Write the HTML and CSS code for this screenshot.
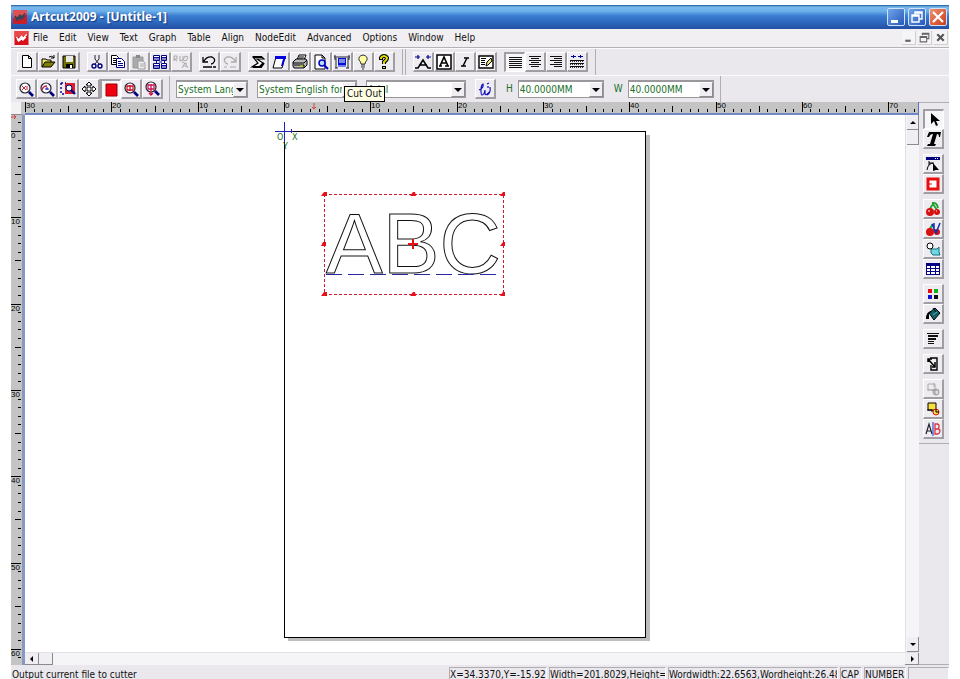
FILE: index.html
```html
<!DOCTYPE html>
<html lang="en">
<head>
    <meta charset="UTF-8">
    <meta name="viewport" content="width=device-width, initial-scale=1.0">
    <title>Artcut2009 - [Untitle-1]</title>
    <link rel="stylesheet" href="styles.css">
</head>
<body>
    <div class="app">
        <header class="titlebar">
            <svg class="logo" viewBox="0 0 16 16"><rect width="16" height="16" fill="#c8202a"/><path d="M0 0h16v5L0 9z" fill="#e05050"/><path d="M2 7l3 3 3-4 2 2 4-4M4 12l4-3 2 1 3-3" stroke="#345" stroke-width="2" fill="none"/></svg>
            <h1 class="title">Artcut2009 - [Untitle-1]</h1>
            <div class="window-buttons">
                <button class="win" aria-label="Minimize"><svg viewBox="0 0 16 16"><path d="M3 11h7v3H3z" fill="#fff"/></svg></button>
                <button class="win" aria-label="Restore"><svg viewBox="0 0 16 16"><path d="M6 6V3h7v7h-3M6 4h7M3 6h7v7H3zM3 7h7" stroke="#fff" stroke-width="1.4" fill="none"/></svg></button>
                <button class="win win-close" aria-label="Close"><svg viewBox="0 0 16 16"><path d="M3 3l10 10M13 3L3 13" stroke="#fff" stroke-width="2.2"/></svg></button>
            </div>
        </header>

        <nav class="menubar">
            <svg class="logo" viewBox="0 0 16 16"><rect width="16" height="16" fill="#d8101c"/><path d="M0 0h16v4L0 8z" fill="#e84848"/><path d="M2 7l3 3 3-4 2 2 4-4M4 12l4-3 2 1 3-3M3 9l2 3M8 7l2 4" stroke="#fff" stroke-width="1.6" fill="none"/></svg>
            <div class="menus">
                <button class="menu">File</button>
                <button class="menu">Edit</button>
                <button class="menu">View</button>
                <button class="menu">Text</button>
                <button class="menu">Graph</button>
                <button class="menu">Table</button>
                <button class="menu">Align</button>
                <button class="menu">NodeEdit</button>
                <button class="menu">Advanced</button>
                <button class="menu">Options</button>
                <button class="menu">Window</button>
                <button class="menu">Help</button>
            </div>
            <div class="child-buttons">
                <button class="child" aria-label="Minimize document"><svg viewBox="0 0 12 12"><path d="M3 8h5v2H3z" fill="#666"/></svg></button>
                <button class="child" aria-label="Restore document"><svg viewBox="0 0 12 12"><path d="M4 4V2h6v5H8M4 3h6M2 5h6v5H2zM2 6h6" stroke="#666" fill="none"/></svg></button>
                <button class="child" aria-label="Close document"><svg viewBox="0 0 12 12"><path d="M3 3l6 6M9 3L3 9" stroke="#555" stroke-width="2"/></svg></button>
            </div>
        </nav>

        <div class="toolbar">
            <div class="group">
                <button class="tool" aria-label="New"><svg viewBox="0 0 16 16"><path d="M3.500 1.500h6l3 3v9h-9zM9.500 1.500v3h3" fill="#fff" stroke="#000"/></svg></button>
                <button class="tool" aria-label="Open"><svg viewBox="0 0 16 16"><path d="M2 13V5h4l1 1h4v2" fill="#f0e860" stroke="#000"/><path d="M2 13l3-5h10l-4 5z" fill="#808000" stroke="#000"/><path d="M9 3q3-2 5 1M14 1v3h-3" fill="none" stroke="#000"/></svg></button>
                <button class="tool" aria-label="Save"><svg viewBox="0 0 16 16"><path d="M2 2h12v12H2z" fill="#707000" stroke="#000"/><path d="M5 2h7v6H5z" fill="#e8e8e8"/><path d="M5 10h7v4H5z" fill="#000"/><path d="M9 11h2v3H9z" fill="#fff"/></svg></button>
            </div>
            <div class="group">
                <button class="tool" aria-label="Cut"><svg viewBox="0 0 16 16"><path d="M6 1v4l4 5M10 1v4l-4 5" fill="none" stroke="#223"/><circle cx="5" cy="12" r="2" fill="none" stroke="#000080" stroke-width="1.4"/><circle cx="11" cy="12" r="2" fill="none" stroke="#000080" stroke-width="1.4"/></svg></button>
                <button class="tool" aria-label="Copy"><svg viewBox="0 0 16 16"><path d="M1.500 1.500h5l2 2v7h-7z" fill="#fff" stroke="#000"/><path d="M3 4.500h3M3 6.500h4M3 8.500h4" stroke="#000"/><path d="M6.500 4.500h5l3 3v6h-8z" fill="#fff" stroke="#000080"/><path d="M8 7.500h3M8 9.500h5M8 11.500h5" stroke="#000080"/></svg></button>
                <button class="tool" aria-label="Paste" disabled><svg viewBox="0 0 16 16"><path d="M2 3h10v11H2z" fill="#aaa" stroke="#999"/><path d="M5 1h4v3H5z" fill="#888"/><path d="M7 7h5l2 2v6H7z" fill="#eee" stroke="#999"/><path d="M9 10h4M9 12h4" stroke="#aaa"/></svg></button>
                <button class="tool" aria-label="Duplicate"><svg viewBox="0 0 16 16"><path d="M1.500 1.500h6v5h-6zM9.500 1.500h5v5h-5zM1.500 9.500h6v5h-6zM9.500 9.500h5v5h-5z" fill="#fff" stroke="#000080"/><path d="M2 3.500h5M10 3.500h4M2 11.500h5M10 11.500h4M4.500 6v3M12.500 6v3M7 8h3M2 5h5M10 5h4M2 13h5M10 13h4" stroke="#1010a0"/></svg></button>
                <button class="tool" aria-label="Copy along path" disabled><svg viewBox="0 0 16 16"><path d="M1 7V2h3v3H1l3 2M7 2v5l3-1V2M12 2l-2 4 3 1 2-4zM9 8l5 2M9 14l3-5 3 5M10 12h4" fill="none" stroke="#aaa"/></svg></button>
            </div>
            <div class="group">
                <button class="tool" aria-label="Undo"><svg viewBox="0 0 16 16"><path d="M2 3v5h5M3 7q3-5 8-4q4 2 2 5q-1 2-3 2" fill="none" stroke="#000" stroke-width="1.3"/><path d="M2 13h9M12 13h3" stroke="#000" stroke-width="1.4"/></svg></button>
                <button class="tool" aria-label="Redo" disabled><svg viewBox="0 0 16 16"><path d="M14 3v5H9M13 7q-3-5-8-4q-4 2-2 5q1 2 3 2" fill="none" stroke="#aaa" stroke-width="1.3"/><path d="M2 13h3M8 13h6" stroke="#aaa"/></svg></button>
            </div>
            <div class="group">
                <button class="tool" aria-label="Plot"><svg viewBox="0 0 16 16"><path d="M3 3h9l2 2H7l6 4-4 4H2l6-4z" fill="#fff" stroke="#000" stroke-width="1.2"/><path d="M3 3h9M3 13h8l3-4" stroke="#000" stroke-width="2" fill="none"/></svg></button>
                <button class="tool" aria-label="Cut out"><svg viewBox="0 0 16 16"><path d="M5 3h9l-3 11H2z" fill="#fff" stroke="#000"/><path d="M4 2h11v3H4zM12 5h2l-2 7h-2z" fill="#0000e0"/></svg></button>
                <button class="tool" aria-label="Print"><svg viewBox="0 0 16 16"><path d="M5 6l2-5h7l-2 5M7 3h5M6 5h5" fill="#fff" stroke="#000"/><path d="M1 8l3-3h10l1 2v4l-3 3H2l-1-2z" fill="#bbb" stroke="#000"/><path d="M1 9h11l3-3M2 11h10v3" stroke="#000" fill="none"/><path d="M8 12h3" stroke="#cc0" stroke-width="1.4"/></svg></button>
                <button class="tool" aria-label="Print preview"><svg viewBox="0 0 16 16"><path d="M2 1h7l3 3v11H2zM9 1v3h3" fill="#fff" stroke="#000"/><circle cx="9" cy="9" r="3" fill="#bdf" stroke="#0000c0" stroke-width="1.5"/><path d="M11 11l4 4" stroke="#0000c0" stroke-width="2"/></svg></button>
                <button class="tool" aria-label="Cutter"><svg viewBox="0 0 16 16"><path d="M0 3h16M1 1v5M15 1v5M2 4v10M14 4v10M1 14h3M12 14h3" stroke="#223" fill="none"/><path d="M4 4h8v7H4z" fill="#0010d0"/><path d="M5 6h6M5 8h6" stroke="#fff"/><path d="M4 12h8" stroke="#0010d0"/></svg></button>
                <button class="tool" aria-label="Tip"><svg viewBox="0 0 16 16"><path d="M6 10q0-2-2-4q-1-4 4-5q5 1 4 5q-2 2-2 4z" fill="#ffffa0" stroke="#333"/><path d="M6 11h4M6 13h4M7 15h2" stroke="#333"/></svg></button>
                <button class="tool" aria-label="Help"><svg viewBox="0 0 16 16"><path d="M5 6V4q1-2 3-2t3 2q0 2-3 4v2" fill="none" stroke="#000" stroke-width="4"/><path d="M5 5V4q1-2 3-2t3 2q0 2-3 4v2" fill="none" stroke="#e8e000" stroke-width="2"/><path d="M6 12h4v3H6z" fill="#000"/><path d="M7 13h2v1H7z" fill="#e8e000"/></svg></button>
            </div>
            <div class="divider"></div>
            <div class="group">
                <button class="tool" aria-label="Text spacing"><svg viewBox="0 0 16 16"><path d="M0 14h3l5-8 5 8h3M4 11h8" fill="none" stroke="#000" stroke-width="1.5"/><path d="M0 3h5M3 1v4M11 3h5M13 1v4" stroke="#000090" stroke-width="1.2"/></svg></button>
                <button class="tool" aria-label="Text frame"><svg viewBox="0 0 16 16"><path d="M1 1h14v14H1z" fill="#fff" stroke="#000" stroke-width="1.5"/><path d="M3 12h3M9 12h4M4 12l4-9 4 9M6 9h5" fill="none" stroke="#000" stroke-width="1.6"/></svg></button>
                <button class="tool" aria-label="Italic"><svg viewBox="0 0 16 16"><path d="M7 4h5M4 12h5M10 4L6 12" stroke="#000" stroke-width="1.5"/></svg></button>
                <button class="tool" aria-label="Edit text"><svg viewBox="0 0 16 16"><path d="M1 2h14v12H1z" fill="#fff" stroke="#000" stroke-width="1.4"/><path d="M3 4.500h5M3 6.500h4M3 8.500h4M3 10.500h4" stroke="#000"/><path d="M8 12l1-4 4-4 1 3-4 4z" fill="#f0e870" stroke="#000"/></svg></button>
            </div>
            <div class="group">
                <button class="tool pressed" aria-label="Justify"><svg class="crisp" viewBox="0 0 16 16"><path d="M2 2h13v1H2zM2 4h13v1H2zM2 6h13v1H2zM2 8h13v1H2zM2 10h13v1H2zM2 12h13v1H2z" fill="#111"/></svg></button>
                <button class="tool" aria-label="Center"><svg class="crisp" viewBox="0 0 16 16"><path d="M2 2h12v1H2zM4 4h8v1H4zM2 6h12v1H2zM4 8h8v1H4zM2 10h12v1H2zM4 12h8v1H4z" fill="#111"/></svg></button>
                <button class="tool" aria-label="Align right"><svg class="crisp" viewBox="0 0 16 16"><path d="M2 2h12v1H2zM6 4h8v1H6zM2 6h12v1H2zM6 8h8v1H6zM2 10h12v1H2zM6 12h8v1H6z" fill="#111"/></svg></button>
                <button class="tool" aria-label="Distribute"><svg class="crisp" viewBox="0 0 16 16"><path d="M2 2h5v1H2zM4 1h1v3H4zM9 2h5v1H9zM11 1h1v3h-1z" fill="#0000a0"/><path d="M1 6h14v1H1zM1 9h14v1H1zM1 12h14v1H1z" fill="#111"/><path d="M1 7.500h14M1 10.500h14M1 13.500h14" stroke="#333" stroke-dasharray="1 1"/></svg></button>
            </div>
            <div class="toolbar-end"></div>
        </div>

        <div class="toolbar toolbar-text">
            <div class="group">
                <button class="tool" aria-label="Zoom selection"><svg viewBox="0 0 16 16"><circle cx="7" cy="7" r="5" fill="#fff" stroke="#223" stroke-width="1.2"/><path d="M4 5l4 4M8 5L4 9M9 5v4" stroke="#d02030"/><path d="M11 11l4 4" stroke="#00007a" stroke-width="2.6"/></svg></button>
                <button class="tool" aria-label="Zoom previous"><svg viewBox="0 0 16 16"><circle cx="7" cy="7" r="5" fill="#fff" stroke="#223" stroke-width="1.2"/><path d="M3 9q1-4 5-4" stroke="#d02030" stroke-width="1.4" fill="none"/><path d="M6 8h4M8 6v3" stroke="#1010c0"/><path d="M11 11l4 4" stroke="#00007a" stroke-width="2.6"/></svg></button>
                <button class="tool" aria-label="Zoom area"><svg viewBox="0 0 16 16"><path d="M5 2h10v11H5z" fill="#e02028"/><path d="M1 2h5M1 2v11h5" stroke="#00008a" stroke-dasharray="2 2" fill="none" stroke-width="1.4"/><circle cx="9" cy="7" r="3" fill="#fff" stroke="#00008a"/><path d="M11 9l4 4" stroke="#00008a" stroke-width="2.4"/></svg></button>
                <button class="tool" aria-label="Pan"><svg viewBox="0 0 16 16"><path d="M8 1l3 3H9v3h3V5l3 3-3 3V9H9v3h2l-3 3-3-3h2V9H4v2L1 8l3-3v2h3V4H5z" fill="#fff" stroke="#000"/></svg></button>
                <button class="tool pressed" aria-label="Fill view"><svg viewBox="0 0 16 16"><path d="M3 2h11v12H3z" fill="#f00010" stroke="#900"/></svg></button>
                <button class="tool" aria-label="Zoom page"><svg viewBox="0 0 16 16"><circle cx="7" cy="7" r="5" fill="#fff" stroke="#223" stroke-width="1.2"/><path d="M4 5h6v4H4zM7 4v6" stroke="#d01020" fill="none" stroke-width="1.3"/><path d="M11 11l4 4" stroke="#00007a" stroke-width="2.6"/></svg></button>
                <button class="tool" aria-label="Zoom all"><svg viewBox="0 0 16 16"><circle cx="7" cy="6" r="5" fill="#fff" stroke="#223" stroke-width="1.2"/><path d="M4 4h6v4H4zM7 3v11M5 12l2 2 2-2" stroke="#d01050" fill="none" stroke-width="1.3"/><path d="M11 10l4 4" stroke="#00007a" stroke-width="2.6"/></svg></button>
            </div>
            <div class="rule"></div>
            <div class="combos">
                <div class="combo combo-narrow">
                    <select aria-label="Language"><option>System Language</option></select>
                    <span class="arrow"></span>
                </div>
                <div class="combo">
                    <select aria-label="Character set"><option>System English for Windows</option></select>
                    <span class="arrow"></span>
                </div>
                <div class="combo">
                    <div class="tooltip" role="tooltip">Cut Out</div>
                    <select class="font-name" aria-label="Font"><option>Arial</option></select>
                    <span class="arrow"></span>
                </div>
            </div>
            <button class="tool" aria-label="Script"><svg viewBox="0 0 16 16"><path d="M2 9q5-2 4-6q-2 1-2 6t1 5q2 0 3-5v4q1 2 4-2M10 3l2-1M11 5v2M13 6q1 6-3 8" fill="none" stroke="#1010c0" stroke-width="1.2"/></svg></button>
            <div class="size">
                <label for="height">H</label>
                <div class="combo combo-size">
                    <select id="height"><option>40.0000MM</option></select>
                    <span class="arrow"></span>
                </div>
            </div>
            <div class="size">
                <label for="width">W</label>
                <div class="combo combo-size">
                    <select id="width"><option>40.0000MM</option></select>
                    <span class="arrow"></span>
                </div>
            </div>
            <div class="toolbar-end"></div>
        </div>

        <main class="work">
            <div class="corner"></div>
            <svg class="ruler-top" id="ruler-top"></svg>
            <svg class="ruler-left" id="ruler-left"></svg>

            <svg class="stage">
                <rect x="263" y="20" width="362" height="506" fill="#bdbdbd"/>
                <rect class="crisp" x="259" y="16" width="361" height="506" fill="#fff" stroke="#000"/>

                <g class="crisp" stroke="#2020c0">
                    <path d="M250 16h18M259 7v20M266 14v4"/>
                    <path d="M259 27v8" stroke="#000"/>
                </g>
                <text class="axis" x="252" y="25">O</text>
                <text class="axis" x="267" y="25">X</text>
                <text class="axis" x="258" y="34">Y</text>

                <text class="outline" x="301" y="158">ABC</text>
                <path class="crisp" d="M301 159h172" stroke="#2828a0" stroke-dasharray="16 6"/>
                <rect class="crisp" x="299" y="79" width="179" height="100" fill="none" stroke="#d01830" stroke-dasharray="3 2"/>
                <g fill="#e81018">
                    <path d="M296 81l3-4h3v4z"/>
                    <path d="M385 81l3-4h2l1 4z"/>
                    <path d="M475 81l3-4h2v4z"/>
                    <path d="M296 131l2-4h3v4z"/>
                    <path d="M475 131l3-4h2v4z"/>
                    <path d="M296 181l3-4h3v4z"/>
                    <path d="M385 181l3-4h2l1 4z"/>
                    <path d="M475 181l3-4h2v4z"/>
                </g>
                <path d="M383 129h10M388 124v10" stroke="#e81018" stroke-width="2"/>
            </svg>

            <div class="scroll scroll-v">
                <button class="scroll-btn" aria-label="Scroll up"><svg viewBox="0 0 8 8"><path d="M1 6l3-3 3 3z"/></svg></button>
                <div class="thumb"></div>
                <button class="scroll-btn last" aria-label="Scroll down"><svg viewBox="0 0 8 8"><path d="M1 3l3 3 3-3z"/></svg></button>
            </div>
            <div class="scroll scroll-h">
                <button class="scroll-btn" aria-label="Scroll left"><svg viewBox="0 0 8 8"><path d="M5 1L2 4l3 3z"/></svg></button>
                <div class="thumb"></div>
                <button class="scroll-btn last" aria-label="Scroll right"><svg viewBox="0 0 8 8"><path d="M3 1l3 3-3 3z"/></svg></button>
            </div>

            <aside class="side">
                <div class="palette">
                    <div class="palette-group">
                        <button class="tool pressed" aria-label="Select"><svg viewBox="0 0 16 16"><path d="M5 1v11l3-3 2 5 2-1-2-4h4z" fill="#000"/></svg></button>
                        <button class="tool" aria-label="Text"><svg viewBox="0 0 16 16"><path d="M4 1h12l-1 5h-1q0-3-2-3L9 13h2l-1 2H2l1-2h2L8 3q-3 0-4 3H2z" fill="#000"/></svg></button>
                    </div>
                    <div class="palette-group">
                        <button class="tool" aria-label="Node edit"><svg viewBox="0 0 16 16"><path d="M1 1h14v3H1z" fill="#000080"/><path d="M10 2.500h1M12 2.500h1" stroke="#fff"/><path d="M2 14q1-7 7-7M4 7h4M4 5v4" fill="none" stroke="#000"/><path d="M8 7l6 7h-3l-3 1z" fill="#000"/></svg></button>
                        <button class="tool" aria-label="Rectangle"><svg viewBox="0 0 16 16"><path d="M3 3h10v10H3z" fill="#fff" stroke="#e81010" stroke-width="3"/><path d="M4 8h3" stroke="#e81010"/></svg></button>
                    </div>
                    <div class="palette-group">
                        <button class="tool" aria-label="Graph library"><svg viewBox="0 0 16 16"><path d="M4 9l4-6 4 6M7 2q5-1 6 5" fill="none" stroke="#20a030" stroke-width="1.8"/><circle cx="5" cy="11" r="4" fill="#d81010"/><circle cx="12" cy="11" r="3" fill="#d81010"/><path d="M3 10h2M11 10h1" stroke="#fff"/></svg></button>
                        <button class="tool" aria-label="Vector library"><svg viewBox="0 0 16 16"><path d="M4 9l4-6" fill="none" stroke="#20a030" stroke-width="2"/><circle cx="5" cy="11" r="4" fill="#d81010"/><circle cx="12" cy="11" r="3" fill="#d81010"/><path d="M7 3l4 9 4-10M9 2v8" fill="none" stroke="#1030b0" stroke-width="1.5"/></svg></button>
                        <button class="tool" aria-label="Shapes"><svg viewBox="0 0 16 16"><path d="M6 8h6l2-2v5l1 3H8l-2-2z" fill="#70d8e0" stroke="#107080"/><circle cx="5" cy="5" r="3" fill="#fff" stroke="#000"/></svg></button>
                        <button class="tool" aria-label="Table"><svg class="crisp" viewBox="0 0 16 16"><path d="M1 2h14v12H1z" fill="#000080"/><path d="M2 5h3v2H2zM6 5h4v2H6zM11 5h3v2h-3zM2 8h3v2H2zM6 8h4v2H6zM11 8h3v2h-3zM2 11h3v2H2zM6 11h4v2H6zM11 11h3v2h-3z" fill="#fff"/></svg></button>
                    </div>
                    <div class="palette-group">
                        <button class="tool" aria-label="Colors"><svg viewBox="0 0 16 16"><path d="M3 3h4v4H3z" fill="#e01010"/><path d="M9 3h4v4H9z" fill="#10b020"/><path d="M3 9h4v4H3z" fill="#1010d0"/><path d="M9 9h4v4H9z" fill="#101010"/></svg></button>
                        <button class="tool" aria-label="Fill"><svg viewBox="0 0 16 16"><path d="M4 7l6-5 5 5-6 7z" fill="#106068" stroke="#000"/><path d="M1 13q0-8 6-8L4 8v5z" fill="#000"/><path d="M8 2l3 4" stroke="#000"/><path d="M8 9l4-3" stroke="#60b0b0"/></svg></button>
                    </div>
                    <div class="palette-group">
                        <button class="tool" aria-label="Arrange"><svg class="crisp" viewBox="0 0 16 16"><path d="M2 2h12v1H2zM3 4h10v2H3zM3 7h8v2H3zM3 10h6v1H3zM3 12h6v1H3z" fill="#111"/></svg></button>
                    </div>
                    <div class="palette-group">
                        <button class="tool" aria-label="Outline"><svg viewBox="0 0 16 16"><path d="M5 2h7v12H6V9" fill="#eee" stroke="#000" stroke-width="1.4"/><path d="M3 3l7 8M3 6V3h4M10 6v5H7" fill="none" stroke="#000" stroke-width="1.5"/></svg></button>
                    </div>
                    <div class="palette-group">
                        <button class="tool" aria-label="Combine" disabled><svg viewBox="0 0 16 16"><path d="M3 3h7v6H3zM2 9h3M9 2v4" fill="none" stroke="#aaa"/><circle cx="11" cy="11" r="3" fill="#ddd" stroke="#999"/><path d="M6 9h7M10 8v6" stroke="#999"/></svg></button>
                        <button class="tool" aria-label="Weld"><svg viewBox="0 0 16 16"><path d="M3 2h8v7H3z" fill="#f8e040" stroke="#000"/><circle cx="11" cy="11" r="3" fill="#f8d040" stroke="#d02010"/><path d="M2 9h5v2M11 8v3h3" stroke="#000" fill="none"/></svg></button>
                        <button class="tool" aria-label="Split text"><svg viewBox="0 0 16 16"><path d="M1 13L4 3l3 10M2 10h4" fill="none" stroke="#223" stroke-width="1.2"/><path d="M8 1v14" stroke="#1030c0"/><path d="M10 3v10h3q2-1 2-3t-2-2h-3h3q1-1 1-3t-2-2z" fill="none" stroke="#e03040" stroke-width="1.3"/></svg></button>
                    </div>
                </div>
            </aside>
        </main>

        <footer class="status">
            <div class="status-text">Output current file to cutter</div>
            <div class="pane pane-pos">X=34.3370,Y=-15.92</div>
            <div class="pane pane-dim">Width=201.8029,Height=</div>
            <div class="pane pane-word">Wordwidth:22.6563,Wordheight:26.48</div>
            <div class="pane pane-cap">CAP</div>
            <div class="pane pane-num">NUMBER</div>
            <div class="pane pane-empty"></div>
        </footer>
    </div>

    <script src="script.js"></script>
</body>
</html>
```

FILE: styles.css
```css
* {
    margin: 0;
    padding: 0;
    box-sizing: border-box;
}

body {
    font-family: "DejaVu Sans Condensed", "DejaVu Sans", sans-serif;
    font-size: 10px;
    line-height: 14px;
    color: #111;
    background-color: #fff;
    overflow: hidden;
}

button, select {
    font: inherit;
    color: inherit;
    border: none;
    background: none;
}

svg {
    display: block;
}

.app {
    display: flex;
    flex-direction: column;
    height: 100vh;
    padding: 5px 11px 0;
}

/* title and menus */
.titlebar {
    display: flex;
    align-items: center;
    gap: 3px;
    height: 24px;
    padding: 0 2px 0 1px;
    background: linear-gradient(#1c5a9c 0, #7ab8ee 2px, #6cb0ea 6px, #3a7cd0 11px, #2c66bc 18px, #234fa4 24px);
}

.logo {
    width: 16px;
    height: 14px;
}

.title {
    flex: 1;
    font-family: "Noto Sans", sans-serif;
    font-size: 12px;
    font-weight: bold;
    color: #fff;
    text-shadow: 1px 1px 1px #123a80;
}

.window-buttons {
    display: flex;
    gap: 3px;
}

.win {
    width: 18px;
    height: 18px;
    border: 1px solid #cfe2fa;
    border-radius: 2px;
    background: linear-gradient(135deg, #6fa6ea, #2858b8);
}

.win-close {
    background: linear-gradient(135deg, #ee9070, #cc3c18);
}

.menubar {
    display: flex;
    align-items: center;
    height: 19px;
    padding: 0 1px 0 3px;
    background-color: #f1eff2;
    border-bottom: 1px solid #b4b2b6;
}

.menubar .logo {
    width: 15px;
}

.menus {
    display: flex;
    flex: 1;
    gap: 11px;
    padding-left: 4px;
}

.child-buttons {
    display: flex;
    gap: 2px;
}

.child {
    width: 14px;
    height: 14px;
    background-color: #f5f4f6;
    border-right: 1px solid #d0ced2;
    border-bottom: 1px solid #d0ced2;
}

/* toolbars */
.toolbar {
    display: flex;
    align-items: center;
    gap: 7px;
    height: 27px;
    padding-left: 6px;
    background-color: #eae8ed;
    border-top: 1px solid #fbfafc;
}

.toolbar-text {
    gap: 6px;
    padding-left: 5px;
}

.group {
    display: flex;
}

.tool {
    display: flex;
    align-items: center;
    justify-content: center;
    width: 21px;
    height: 20px;
    background-color: #eeecf0;
    border: 1px solid #fff;
    border-right: 2px solid #a09ea2;
    border-bottom: 2px solid #a09ea2;
}

.tool svg {
    width: 16px;
    height: 16px;
}

.pressed {
    background-color: #f6f5f7;
    border: 1px solid #fff;
    border-top: 2px solid #a09ea2;
    border-left: 2px solid #a09ea2;
}

.divider {
    width: 4px;
    height: 26px;
    border-left: 1px solid #b0aeb2;
    border-right: 1px solid #b0aeb2;
}

.rule, .toolbar-end {
    width: 1px;
    height: 26px;
    background-color: #b0aeb2;
}

.combos {
    display: flex;
    gap: 9px;
    padding-right: 3px;
}

.combo {
    position: relative;
    display: flex;
    width: 100px;
    height: 18px;
    background-color: #fff;
    border: 1px solid #9a989c;
    border-top-width: 2px;
}

.combo-narrow {
    width: 72px;
}

.combo-size {
    width: 86px;
}

.combo select {
    flex: 1;
    min-width: 0;
    padding-left: 1px;
    color: #207028;
    appearance: none;
    overflow: hidden;
    text-overflow: clip;
}

.arrow {
    display: flex;
    align-items: center;
    justify-content: center;
    width: 14px;
    background-color: #f0eef2;
    border: 1px solid #fff;
    border-right-color: #8c8a8e;
    border-bottom-color: #8c8a8e;
}

.arrow::before {
    content: "";
    border: 4px solid transparent;
    border-top-color: #000;
    border-bottom-width: 0;
}

.tooltip {
    position: absolute;
    z-index: 2;
    left: -23px;
    top: 4px;
    padding: 0 2px;
    white-space: nowrap;
    background-color: #ffffe6;
    border: 1px solid #000;
}

.size {
    display: flex;
    align-items: center;
    gap: 5px;
    padding-left: 4px;
    color: #207028;
}

/* drawing area */
.work {
    flex: 1;
    min-height: 0;
    display: grid;
    grid-template-columns: 14px 1fr 14px 30px;
    grid-template-rows: 13px 1fr 13px;
}

.corner {
    border-right: 4px solid #c4c4c4;
    border-bottom: 1px solid #8c8a8e;
    background-color: #f2f2f4;
}

.ruler-top {
    grid-column: 2 / 4;
    width: 100%;
    height: 100%;
    background-color: #c4c4c4;
    border-right: 1px solid #5078c0;
    border-bottom: 2px solid #7088c4;
}

.ruler-left {
    grid-column: 1;
    grid-row: 2 / 4;
    width: 100%;
    height: 100%;
    background-color: #c4c4c4;
    border-right: 3px solid #8898c4;
}

.ruler-top text, .ruler-left text {
    font-family: "Liberation Sans", sans-serif;
    font-size: 8px;
}

.stage {
    grid-column: 2;
    grid-row: 2;
    width: 100%;
    height: 100%;
    background-color: #fff;
}

.crisp {
    shape-rendering: crispEdges;
}

.axis {
    font-size: 9px;
    fill: #207028;
}

.outline {
    font-family: "Liberation Sans", Arial, sans-serif;
    font-size: 85px;
    fill: none;
    stroke: #111;
    stroke-width: 1px;
}

.scroll {
    display: flex;
    background-color: #f5f4f6;
}

.scroll-v {
    grid-column: 3;
    grid-row: 2;
    flex-direction: column;
    padding-left: 1px;
    border-left: 1px solid #e2e0e4;
}

.scroll-h {
    grid-column: 2 / 4;
    grid-row: 3;
    border-top: 1px solid #e2e0e4;
}

.scroll-btn, .thumb {
    display: flex;
    align-items: center;
    justify-content: center;
    background-color: #f0eef2;
    border-right: 1px solid #8c8a8e;
    border-bottom: 1px solid #8c8a8e;
}

.scroll-btn svg {
    width: 8px;
    height: 8px;
}

.scroll-v .scroll-btn, .scroll-v .thumb {
    height: 15px;
}

.scroll-h .scroll-btn, .scroll-h .thumb {
    width: 14px;
}

.scroll-v .last {
    margin-top: auto;
}

.scroll-h .last {
    margin-left: auto;
}

.side {
    grid-column: 4;
    grid-row: 1 / 4;
    background-color: #eae8ed;
    border-top: 1px solid #b0aeb2;
    border-bottom: 1px solid #b0aeb2;
}

.palette {
    display: flex;
    flex-direction: column;
    gap: 5px;
    padding: 6px 4px 4px;
    border-bottom: 1px solid #b0aeb2;
}

/* status bar */
.status {
    display: flex;
    gap: 2px;
    height: 14px;
    padding-top: 2px;
    background-color: #eae8ed;
    overflow: hidden;
    white-space: nowrap;
}

.status-text {
    flex: 1;
    padding-left: 1px;
    padding-top: 1px;
}

.pane {
    height: 16px;
    overflow: hidden;
    border: 1px solid #b0aeb2;
    border-right-color: #fff;
}

.pane-pos {
    width: 98px;
}

.pane-dim {
    width: 117px;
}

.pane-word {
    width: 170px;
}

.pane-cap {
    width: 22px;
}

.pane-num {
    width: 42px;
}

.pane-empty {
    width: 41px;
}
```

FILE: script.js
```javascript
const SVG = 'http://www.w3.org/2000/svg';
const TEN = 86.3; // pixels for ten ruler units

function add(parent, name, attrs, text) {
    const el = document.createElementNS(SVG, name);
    for (const key in attrs) {
        el.setAttribute(key, attrs[key]);
    }
    if (text !== undefined) {
        el.textContent = text;
    }
    parent.appendChild(el);
}

function drawRuler(id, zero, first, last, vertical) {
    const svg = document.getElementById(id);
    for (let i = first; i <= last; i++) {
        const pos = Math.round(zero + i * TEN / 10);
        const size = i % 10 === 0 ? 10 : i % 5 === 0 ? 6 : 3;
        if (vertical) {
            add(svg, 'rect', { x: 10 - size, y: pos, width: size, height: 1 });
        } else {
            add(svg, 'rect', { x: pos, y: 10 - size, width: 1, height: size });
        }
        if (i % 10 === 0) {
            const label = Math.abs(i);
            add(svg, 'text', vertical ? { x: 0, y: pos + 7 } : { x: pos + 1, y: 6 }, label);
        }
    }
}

drawRuler('ruler-top', 259, -30, 73, false);
drawRuler('ruler-left', 16, -1, 61, true);

// pointer position marks
add(document.getElementById('ruler-top'), 'path', { d: 'M289 1v6M287 5l2 2 2-2', stroke: '#d04040', fill: 'none' });
add(document.getElementById('ruler-left'), 'path', { d: 'M0 2h5M3 0l2 2-2 2', stroke: '#d04040', fill: 'none' });
```
